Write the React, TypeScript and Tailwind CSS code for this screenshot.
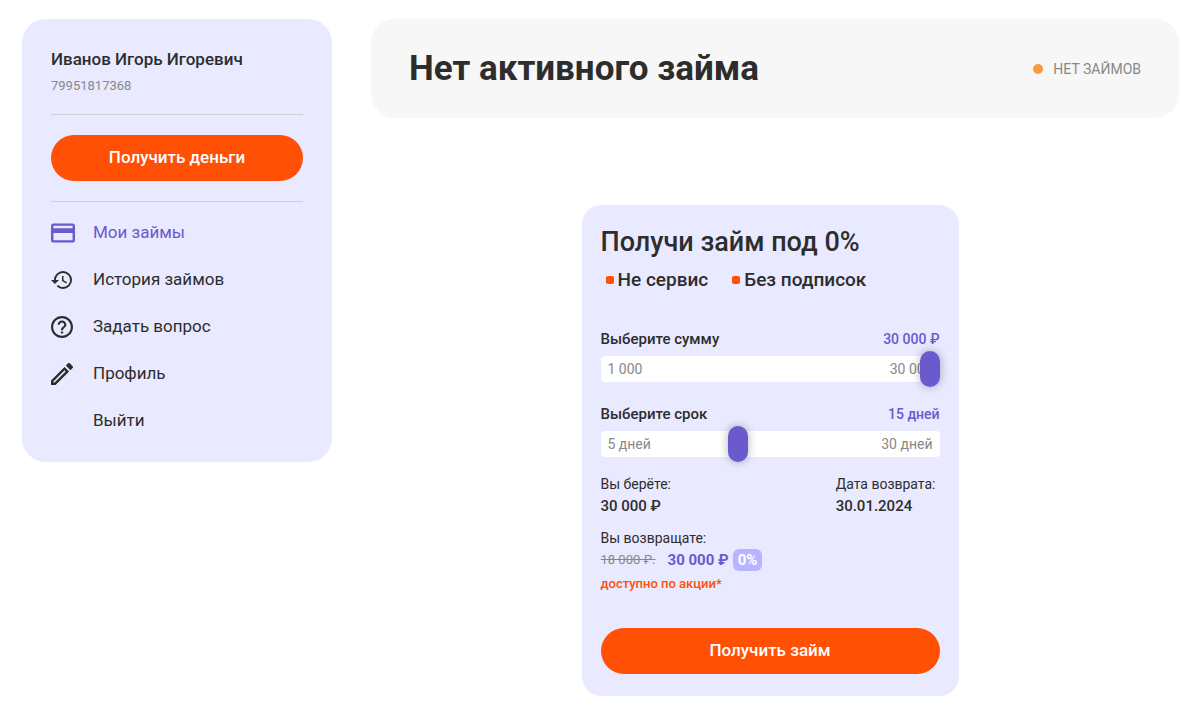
import { useState } from "react";
import type { ReactNode } from "react";

function CardIcon() {
  return (
    <svg viewBox="2 4 20 16" className="h-5 w-6" fill="currentColor" aria-hidden="true">
      <path d="M20 4H4c-1.11 0-1.99.89-1.99 2L2 18c0 1.11.89 2 2 2h16c1.11 0 2-.89 2-2V6c0-1.11-.89-2-2-2zm0 14H4v-6h16v6zm0-10H4V6h16v2z" />
    </svg>
  );
}

function HistoryIcon() {
  return (
    <svg viewBox="1 2 22 20" className="h-5 w-[22px]" fill="currentColor" aria-hidden="true">
      <path d="M13 3a9 9 0 0 0-9 9H1l3.89 3.89.07.14L9 12H6c0-3.87 3.13-7 7-7s7 3.13 7 7-3.13 7-7 7c-1.93 0-3.68-.79-4.94-2.06l-1.42 1.42A8.954 8.954 0 0 0 13 21a9 9 0 0 0 0-18zm-1 5v5l4.28 2.54.72-1.21-3.5-2.08V8H12z" />
    </svg>
  );
}

function HelpIcon() {
  return (
    <svg viewBox="2 2 20 20" className="size-[22px]" fill="currentColor" aria-hidden="true">
      <path d="M11 18h2v-2h-2v2zm1-16C6.48 2 2 6.48 2 12s4.48 10 10 10 10-4.48 10-10S17.52 2 12 2zm0 18c-4.41 0-8-3.59-8-8s3.59-8 8-8 8 3.59 8 8-3.59 8-8 8zm0-14c-2.21 0-4 1.79-4 4h2c0-1.1.9-2 2-2s2 .9 2 2c0 2-3 1.75-3 5h2c0-2.25 3-2.5 3-5 0-2.21-1.79-4-4-4z" />
    </svg>
  );
}

function PencilIcon() {
  return (
    <svg viewBox="3 3 18 18" className="size-[22px]" fill="currentColor" aria-hidden="true">
      <path d="M14.06 9.02l.92.92L5.92 19H5v-.92l9.06-9.06M17.66 3c-.25 0-.51.1-.7.29l-1.83 1.83 3.75 3.75 1.83-1.83a.996.996 0 0 0 0-1.41l-2.34-2.34c-.2-.2-.45-.29-.71-.29zm-3.6 3.19L3 17.25V21h3.75L17.81 9.94l-3.75-3.75z" />
    </svg>
  );
}

const menu: { label: string; icon?: ReactNode; active?: boolean }[] = [
  { label: "Мои займы", icon: <CardIcon />, active: true },
  { label: "История займов", icon: <HistoryIcon /> },
  { label: "Задать вопрос", icon: <HelpIcon /> },
  { label: "Профиль", icon: <PencilIcon /> },
  { label: "Выйти" },
];

function Sidebar() {
  return (
    <aside className="w-[310px] shrink-0 rounded-3xl bg-[#e9e9ff] px-[29px] pt-7 pb-[18px]">
      <p className="text-[17px] leading-6 font-medium">Иванов Игорь Игоревич</p>
      <p className="mt-[3px] text-[13px] leading-6 text-[#888888]">79951817368</p>
      <div className="mt-4 border-y border-[#d0d0d4] py-5">
        <button className="block h-[46px] w-full rounded-full bg-[#ff5005] pb-[2px] text-[17px] leading-6 font-medium text-white">
          Получить деньги
        </button>
      </div>
      <nav className="mt-[7px]">
        <ul>
          {menu.map((item) => (
            <li key={item.label}>
              <a
                href="#"
                className={
                  item.active
                    ? "flex h-[47px] items-center text-[17px] text-[#6a5acd]"
                    : "flex h-[47px] items-center text-[17px] text-[#2d2d2d]"
                }
              >
                <span className="w-[42px] shrink-0">{item.icon}</span>
                {item.label}
              </a>
            </li>
          ))}
        </ul>
      </nav>
    </aside>
  );
}

type SliderProps = {
  id: string;
  label: string;
  value: number;
  display: string;
  min: number;
  max: number;
  step: number;
  minLabel: string;
  maxLabel: string;
  onChange: (value: number) => void;
};

function Slider({ id, label, value, display, min, max, step, minLabel, maxLabel, onChange }: SliderProps) {
  return (
    <div>
      <div className="flex items-center justify-between leading-6 font-medium">
        <label htmlFor={id} className="text-[15px] leading-6">
          {label}
        </label>
        <output htmlFor={id} className="text-sm leading-6 text-[#6a5acd]">
          {display}
        </output>
      </div>
      <div className="grid items-center">
        <div className="col-start-1 row-start-1 flex h-[26px] items-center justify-between rounded bg-white px-[7px] text-sm text-[#888888]">
          <span>{minLabel}</span>
          <span>{maxLabel}</span>
        </div>
        <input
          id={id}
          type="range"
          min={min}
          max={max}
          step={step}
          value={value}
          onChange={(e) => onChange(Number(e.target.value))}
          className="relative col-start-1 row-start-1 h-9 w-full cursor-pointer appearance-none bg-transparent [&::-webkit-slider-thumb]:h-9 [&::-webkit-slider-thumb]:w-5 [&::-webkit-slider-thumb]:appearance-none [&::-webkit-slider-thumb]:rounded-full [&::-webkit-slider-thumb]:bg-[#6a5acd] [&::-webkit-slider-thumb]:shadow-[0_0_10px_rgba(0,0,0,0.3)]"
        />
      </div>
    </div>
  );
}

const money = (n: number) => `${String(n).replace(/\B(?=(\d{3})+$)/g, " ")} ₽`;

function LoanCard() {
  const [amount, setAmount] = useState(30000);
  const [days, setDays] = useState(15);
  return (
    <section className="w-[377px] rounded-[20px] bg-[#e9e9ff] px-[19px] pt-[21px] pb-[22px]">
      <h2 className="text-[27px] leading-8 font-medium">Получи займ под 0%</h2>
      <ul className="mt-2 flex gap-6 pl-[5px] text-[19px] leading-7 font-medium">
        <li className="flex items-center gap-1">
          <span className="size-2 rounded-xs bg-[#ff5005]" />
          Не сервис
        </li>
        <li className="flex items-center gap-1">
          <span className="size-2 rounded-xs bg-[#ff5005]" />
          Без подписок
        </li>
      </ul>
      <div className="mt-[33px] flex flex-col gap-[15px]">
        <Slider
          id="amount"
          label="Выберите сумму"
          value={amount}
          display={money(amount)}
          min={1000}
          max={30000}
          step={1000}
          minLabel="1 000"
          maxLabel="30 000"
          onChange={setAmount}
        />
        <Slider
          id="term"
          label="Выберите срок"
          value={days}
          display={`${days} дней`}
          min={5}
          max={30}
          step={1}
          minLabel="5 дней"
          maxLabel="30 дней"
          onChange={setDays}
        />
      </div>
      <dl className="mt-[11px] flex justify-between">
        <div>
          <dt className="text-sm leading-[22px]">Вы берёте:</dt>
          <dd className="text-[15px] leading-[22px] font-medium">{money(amount)}</dd>
        </div>
        <div className="pr-1">
          <dt className="text-sm leading-[22px]">Дата возврата:</dt>
          <dd className="text-[15px] leading-[22px] font-medium">30.01.2024</dd>
        </div>
      </dl>
      <dl className="mt-[10px]">
        <dt className="text-sm leading-[22px]">Вы возвращате:</dt>
        <dd className="flex items-center leading-[22px]">
          <s className="text-[13px] text-[#888888]">18 000 ₽.</s>
          <span className="ml-3 text-[15px] font-bold text-[#6a5acd]">{money(amount)}</span>
          <span className="ml-1 rounded-md bg-[#b8b5ff] px-[5px] text-[15px] leading-[22px] font-bold text-white">
            0%
          </span>
        </dd>
      </dl>
      <p className="mt-[3px] text-[13px] leading-5 font-medium text-[#ff5005]">доступно по акции*</p>
      <button className="mt-[34px] block h-[46px] w-full rounded-full bg-[#ff5005] pb-[2px] text-[17px] leading-6 font-medium text-white">
        Получить займ
      </button>
    </section>
  );
}

export default function App() {
  return (
    <div className="flex min-h-screen items-start gap-[39px] bg-white py-[19px] pr-[21px] pl-[22px] font-['Roboto',sans-serif] text-[#2d2d2d]">
      <Sidebar />
      <main className="min-w-0 flex-1">
        <header className="flex h-[99px] items-center justify-between rounded-3xl bg-[#f7f7f7] px-[38px]">
          <h1 className="text-[35px] leading-10 font-bold">Нет активного займа</h1>
          <p className="flex items-center gap-[10px] text-sm text-[#888888]">
            <span className="size-[10px] rounded-full bg-[#f79945]" />
            НЕТ ЗАЙМОВ
          </p>
        </header>
        <div className="mt-[87px] flex justify-center pr-[10px]">
          <LoanCard />
        </div>
      </main>
    </div>
  );
}
